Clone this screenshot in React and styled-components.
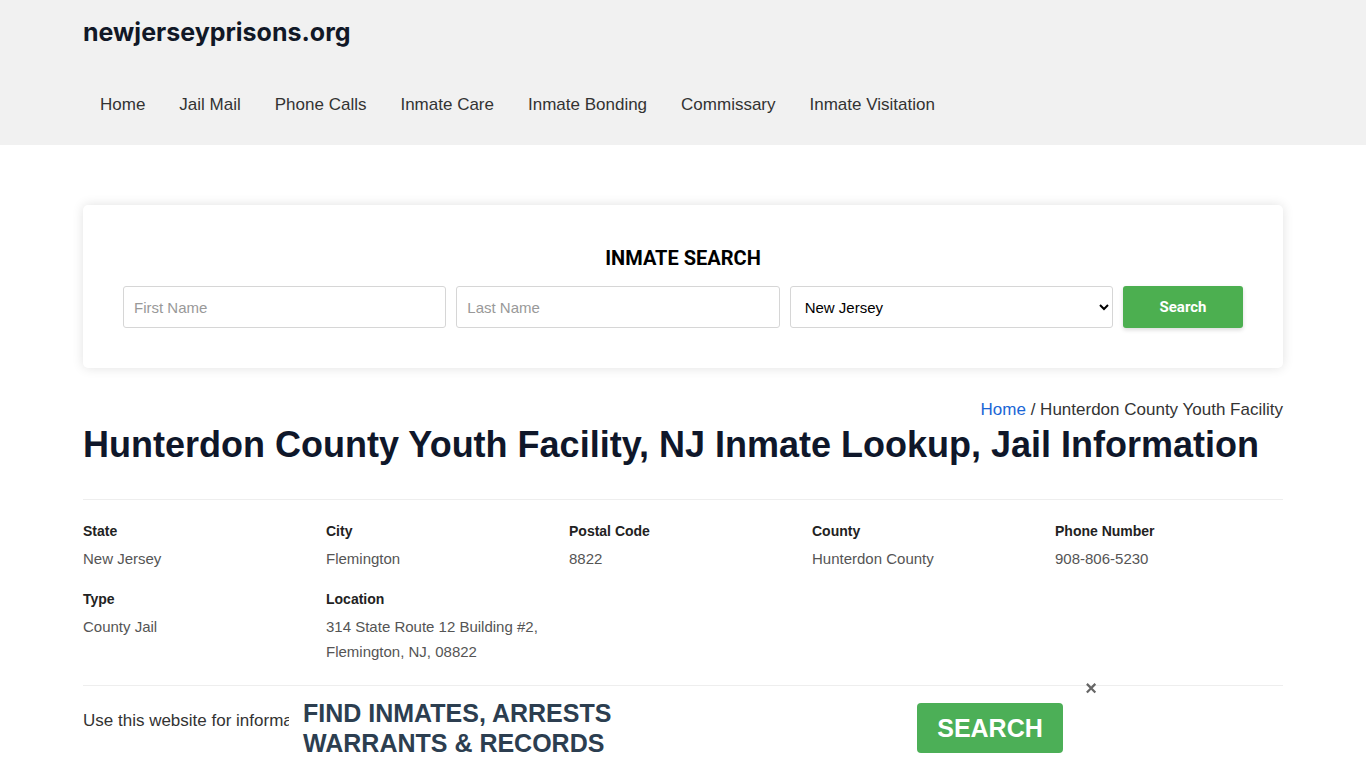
import React from "react";
import styled, { createGlobalStyle } from "styled-components";

const GlobalStyle = createGlobalStyle`
  * { box-sizing: border-box; }
  body {
    margin: 0;
    font-family: "Liberation Sans", Arial, sans-serif;
    color: #333;
    background: #fff;
  }
`;

const Header = styled.header`
  background: #f1f1f1;
  height: 145px;
`;

const Container = styled.div`
  width: 1200px;
  margin: 0 auto;
`;

const Logo = styled.a`
  display: block;
  padding-top: 16px;
  font-family: Inter, "Liberation Sans", sans-serif;
  font-weight: 700;
  font-size: 25px;
  letter-spacing: 0;
  color: #111827;
  text-decoration: none;
  line-height: 32px;
`;

const Nav = styled.nav`
  display: flex;
  margin-top: 41px;
`;

const NavLink = styled.a`
  padding: 0 17px;
  font-size: 17px;
  line-height: 32px;
  color: #333;
  text-decoration: none;
`;

const Main = styled.main`
  padding-top: 60px;
`;

const SearchCard = styled.section`
  background: #fff;
  border-radius: 5px;
  box-shadow: 0 0 12px rgba(0, 0, 0, 0.12);
  padding: 38px 40px 40px;
  text-align: center;
`;

const SearchTitle = styled.h2`
  margin: 0 0 13px;
  font-family: Roboto, "Liberation Sans", sans-serif;
  font-weight: 700;
  font-size: 20px;
  line-height: 30px;
  color: #000;
`;

const SearchRow = styled.form`
  display: flex;
  gap: 10px;
`;

const Field = styled.input`
  flex: 1;
  height: 42px;
  padding: 0 10px;
  border: 1px solid #d6d6d6;
  border-radius: 3px;
  font-family: "Liberation Sans", Arial, sans-serif;
  font-size: 15px;
  color: #333;
  &::placeholder { color: #999; }
`;

const Select = styled.select`
  flex: 1;
  height: 42px;
  padding: 0 10px;
  border: 1px solid #d6d6d6;
  border-radius: 3px;
  background: #fff;
  font-family: "Liberation Sans", Arial, sans-serif;
  font-size: 15px;
  color: #000;
`;

const SearchButton = styled.button`
  width: 120px;
  height: 42px;
  border: none;
  border-radius: 3px;
  background: #4caf50;
  color: #fff;
  font-family: Roboto, "Liberation Sans", sans-serif;
  font-weight: 700;
  font-size: 15px;
  box-shadow: 0 2px 4px rgba(0, 0, 0, 0.15);
`;

const Breadcrumb = styled.div`
  margin-top: 32px;
  text-align: right;
  font-size: 17px;
  line-height: 20px;
  color: #333;
  a { color: #1a66d6; text-decoration: none; }
`;

const Title = styled.h1`
  margin: 1px 0 0;
  font-size: 36px;
  line-height: 48px;
  font-weight: 700;
  color: #0f172a;
`;

const Divider = styled.hr`
  margin: 0;
  border: none;
  border-top: 1px solid #eeeeee;
`;

const Spacer = styled.div`
  height: ${(p) => p.$h}px;
`;

const InfoGrid = styled.div`
  display: grid;
  grid-template-columns: repeat(5, 228px);
  column-gap: 15px;
  row-gap: 18px;
  padding: 21px 0 21px;
`;

const InfoItem = styled.div``;

const Label = styled.div`
  font-size: 14px;
  font-weight: 700;
  line-height: 20px;
  color: #222;
  margin-bottom: 5px;
`;

const Value = styled.div`
  font-size: 15px;
  line-height: 25px;
  color: #555;
`;

const Intro = styled.p`
  margin: 23px 0 40px;
  font-size: 17px;
  line-height: 24px;
  color: #333;
`;

const Banner = styled.div`
  position: fixed;
  bottom: 0;
  left: 289px;
  width: 787px;
  height: 78px;
  background: #fff;
  display: flex;
  align-items: center;
  padding: 0 13px 0 14px;
`;

const BannerText = styled.div`
  flex: 1;
  font-size: 25px;
  line-height: 30px;
  font-weight: 700;
  color: #2c3e50;
  margin-top: -2px;
`;

const BannerButton = styled.button`
  width: 146px;
  height: 50px;
  margin-top: -2px;
  border: none;
  border-radius: 4px;
  background: #4caf57;
  color: #fff;
  font-family: "Liberation Sans", Arial, sans-serif;
  font-weight: 700;
  font-size: 25px;
`;

const Close = styled.button`
  position: fixed;
  left: 1083px;
  top: 680px;
  width: 16px;
  height: 16px;
  padding: 0;
  border: none;
  background: transparent;
  color: #666;
  font-size: 20px;
  line-height: 16px;
  font-weight: 700;
`;

const navItems = [
  "Home",
  "Jail Mail",
  "Phone Calls",
  "Inmate Care",
  "Inmate Bonding",
  "Commissary",
  "Inmate Visitation",
];

const info = [
  { label: "State", value: ["New Jersey"] },
  { label: "City", value: ["Flemington"] },
  { label: "Postal Code", value: ["8822"] },
  { label: "County", value: ["Hunterdon County"] },
  { label: "Phone Number", value: ["908-806-5230"] },
  { label: "Type", value: ["County Jail"] },
  { label: "Location", value: ["314 State Route 12 Building #2,", "Flemington, NJ, 08822"] },
];

export default function App() {
  return (
    <>
      <GlobalStyle />
      <Header>
        <Container>
          <Logo href="#">newjerseyprisons.org</Logo>
          <Nav>
            {navItems.map((n) => (
              <NavLink key={n} href="#">{n}</NavLink>
            ))}
          </Nav>
        </Container>
      </Header>
      <Main>
        <Container>
          <SearchCard>
            <SearchTitle>INMATE SEARCH</SearchTitle>
            <SearchRow onSubmit={(e) => e.preventDefault()}>
              <Field placeholder="First Name" />
              <Field placeholder="Last Name" />
              <Select defaultValue="New Jersey">
                <option>New Jersey</option>
              </Select>
              <SearchButton>Search</SearchButton>
            </SearchRow>
          </SearchCard>
          <Breadcrumb>
            <a href="#">Home</a> / Hunterdon County Youth Facility
          </Breadcrumb>
          <Title>Hunterdon County Youth Facility, NJ Inmate Lookup, Jail Information</Title>
          <Spacer $h={30} />
          <Divider />
          <InfoGrid>
            {info.map((i) => (
              <InfoItem key={i.label}>
                <Label>{i.label}</Label>
                <Value>
                  {i.value.map((v) => (
                    <div key={v}>{v}</div>
                  ))}
                </Value>
              </InfoItem>
            ))}
          </InfoGrid>
          <Divider />
          <Intro>
            Use this website for information about inmates held in Hunterdon County Youth Facility, New Jersey.
          </Intro>
        </Container>
      </Main>
      <Banner>
        <BannerText>
          FIND INMATES, ARRESTS
          <br />
          WARRANTS &amp; RECORDS
        </BannerText>
        <BannerButton>SEARCH</BannerButton>
      </Banner>
      <Close aria-label="close">×</Close>
    </>
  );
}
